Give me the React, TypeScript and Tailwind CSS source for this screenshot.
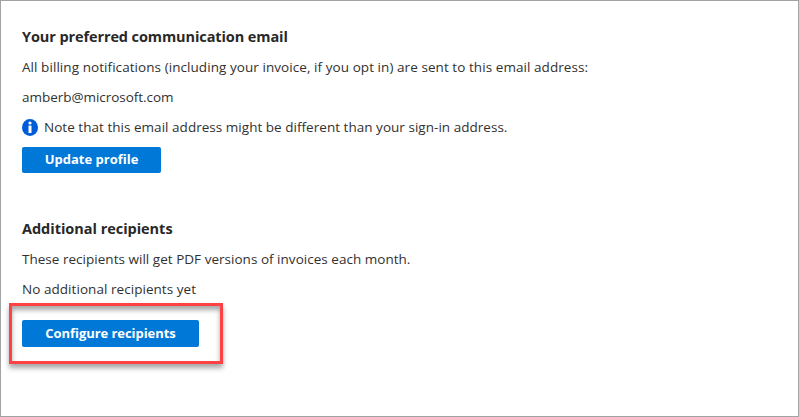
import React from "react";

const heading = "h-[30px] whitespace-nowrap text-[14.5px] leading-[30px] font-bold text-[#292827]";
const line = "h-[30px] whitespace-nowrap text-[13.5px] leading-[30px] text-[#323130]";
const button =
  "block rounded-[2px] bg-[#0078d7] text-center whitespace-nowrap text-[13px] font-bold text-white";

function InfoIcon() {
  return (
    <svg className="mr-[6px] h-[17px] w-4 shrink-0" viewBox="0 0 16 17" aria-hidden="true">
      <ellipse cx="8" cy="8.5" rx="8" ry="8.5" fill="#015cda" />
      <circle cx="8" cy="4" r="1.6" fill="#fff" />
      <rect x="6.5" y="6.6" width="3" height="7.4" fill="#fff" />
    </svg>
  );
}

export default function App() {
  return (
    <main className="flex h-[417px] w-[799px] flex-col items-start overflow-hidden border border-[#a3a3a3] bg-white pt-[21px] pl-[21px] font-['Open_Sans','Noto_Sans',sans-serif]">
      <section>
        <h2 className={heading}><span className="tracking-[-0.1px]">Your preferred communication email</span></h2>
        <p className={line}><span className="tracking-[0.065px]">All billing notifications (including your invoice, if you opt in) are sent to this email address:</span></p>
        <p className={line}><span className="tracking-[-0.04px]">amberb@microsoft.com</span></p>
        <p className={`flex items-center ${line}`}>
          <InfoIcon />
          <span className="tracking-[0.03px]">Note that this email address might be different than your sign-in address.</span>
        </p>
        <button className={`mt-[5px] h-[26px] w-[139px] ${button}`}>Update profile</button>
      </section>
      <section className="mt-[41px]">
        <h2 className={heading}><span className="tracking-[-0.03px]">Additional recipients</span></h2>
        <p className={line}><span className="tracking-[0.025px]">These recipients will get PDF versions of invoices each month.</span></p>
        <p className={line}><span className="tracking-[0.05px]">No additional recipients yet</span></p>
        <div className="-mt-px -ml-[13px] h-[61px] w-[214px] border-[3px] border-[#fd4144] pt-[14px] pl-[10px] shadow-[0px_4px_5px_rgba(0,0,0,0.35),inset_0px_4px_5px_rgba(0,0,0,0.35)]">
          <button className={`h-[27px] w-[177px] tracking-[-0.05px] ${button}`}>Configure recipients</button>
        </div>
      </section>
    </main>
  );
}
